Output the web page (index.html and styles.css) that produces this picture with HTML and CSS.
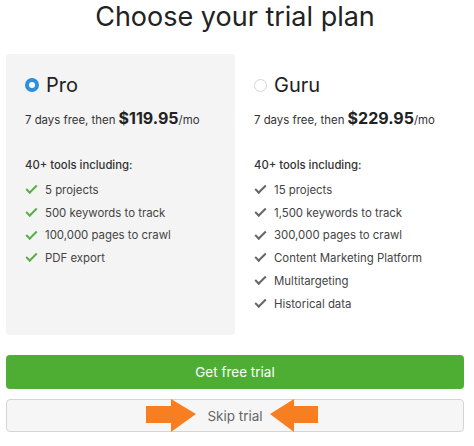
FILE: index.html
```html
<!DOCTYPE html>
<html lang="en">
<head>
    <meta charset="UTF-8">
    <meta name="viewport" content="width=device-width, initial-scale=1.0">
    <title>Choose your trial plan</title>
    <link rel="stylesheet" href="styles.css">
</head>
<body>
    <div class="container">
        <h1>Choose your trial plan</h1>

        <div class="plans">
            <div class="plan selected">
                <div class="plan-name">
                    <span class="radio checked"></span>
                    Pro
                </div>
                <div class="price">7 days free, then <b>$119.95</b>/mo</div>
                <div class="tools">40+ tools including:</div>
                <ul class="features">
                    <li>5 projects</li>
                    <li>500 keywords to track</li>
                    <li>100,000 pages to crawl</li>
                    <li>PDF export</li>
                </ul>
            </div>
            <div class="plan">
                <div class="plan-name">
                    <span class="radio"></span>
                    Guru
                </div>
                <div class="price">7 days free, then <b>$229.95</b>/mo</div>
                <div class="tools">40+ tools including:</div>
                <ul class="features">
                    <li>15 projects</li>
                    <li>1,500 keywords to track</li>
                    <li>300,000 pages to crawl</li>
                    <li>Content Marketing Platform</li>
                    <li>Multitargeting</li>
                    <li>Historical data</li>
                </ul>
            </div>
        </div>

        <button class="btn btn-primary">Get free trial</button>
        <button class="btn btn-secondary">
            Skip trial
            <svg class="arrow arrow-right" width="50" height="34" viewBox="0 0 50 34">
                <polygon points="0,7 25,7 25,0 50,15 25,33 25,24 0,24" fill="#f77f21"/>
            </svg>
            <svg class="arrow arrow-left" width="48" height="34" viewBox="0 0 48 34">
                <polygon points="48,7 24,7 24,0 0,15 24,33 24,24 48,24" fill="#f77f21"/>
            </svg>
        </button>
    </div>
</body>
</html>
```

FILE: styles.css
```css
body {
    margin: 0;
    padding: 0;
    background-color: #fff;
    color: #333;
    font-family: 'Inter', sans-serif;
}
.container {
    width: 458px;
    padding-left: 6px;
}
h1 {
    margin: 0;
    font-size: 27px;
    line-height: 34px;
    font-weight: 400;
    color: #222;
    text-align: center;
}
.plans {
    display: grid;
    grid-template-columns: 229px 229px;
    margin-top: 20px;
}
.plan {
    padding: 19px 19px 0;
    height: 262px;
}
.plan.selected {
    background-color: #f4f4f4;
    border-radius: 4px;
}
.plan-name {
    display: flex;
    align-items: center;
    gap: 7px;
    font-size: 20px;
    line-height: 24px;
    color: #222;
}
.radio {
    width: 13px;
    height: 13px;
    border-radius: 50%;
    border: 1px solid #d6d6d6;
    background-color: #fff;
    box-sizing: border-box;
}
.radio.checked {
    width: 14px;
    height: 14px;
    border: 4.5px solid #2f8fdc;
}
.price {
    margin-top: 10px;
    font-size: 11.4px;
    line-height: 22px;
    color: #333;
}
.price b {
    font-size: 16px;
    font-weight: 700;
    color: #222;
}
.tools {
    margin-top: 23px;
    font-size: 11.3px;
    line-height: 22px;
    font-weight: 500;
    color: #333;
}
.features {
    list-style: none;
    margin: 3px 0 0;
    padding: 0;
}
.features li {
    display: flex;
    align-items: center;
    gap: 6px;
    font-size: 11.4px;
    line-height: 22.7px;
    color: #444;
}
.features li::before {
    content: '';
    width: 9px;
    height: 4px;
    margin: 0 2px 4px 1px;
    border-left: 2.2px solid #666;
    border-bottom: 2.2px solid #666;
    transform: rotate(-45deg);
}
.selected .features li::before {
    border-color: #5bae4a;
}
.btn {
    display: block;
    width: 458px;
    font-family: 'Inter', sans-serif;
    font-size: 13.5px;
    border-radius: 4px;
    cursor: pointer;
}
.btn-primary {
    margin-top: 20px;
    height: 34px;
    border: none;
    background-color: #4dae33;
    color: #fff;
}
.btn-secondary {
    position: relative;
    margin-top: 10px;
    height: 33px;
    border: 1px solid #d4d4d4;
    background-color: #f6f6f6;
    color: #666;
}
.arrow {
    position: absolute;
    top: -1px;
}
.arrow-right {
    left: 139px;
}
.arrow-left {
    left: 263px;
}
```
